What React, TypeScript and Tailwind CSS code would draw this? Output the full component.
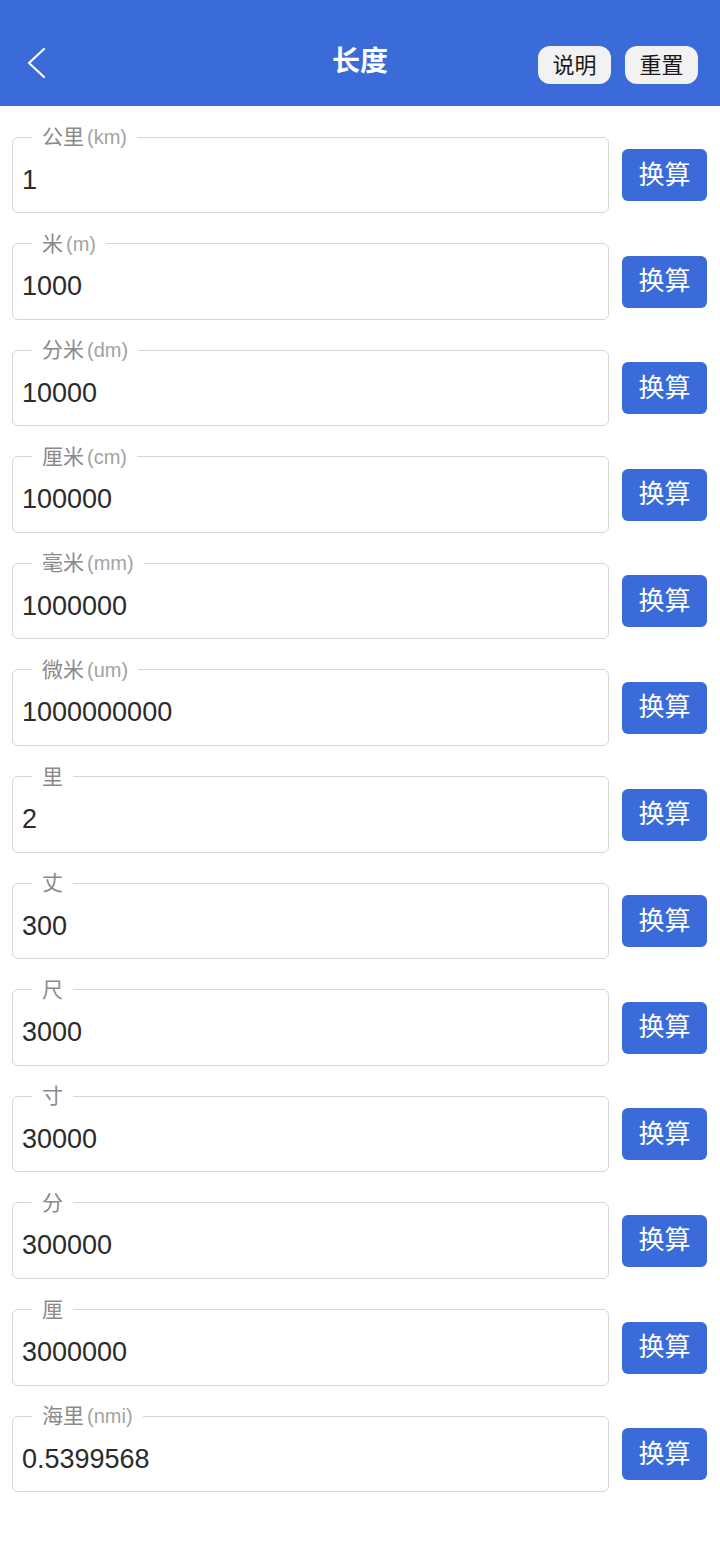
const ROWS: { name: string; unit?: string; value: string }[] = [
  { name: "公里", unit: "(km)", value: "1" },
  { name: "米", unit: "(m)", value: "1000" },
  { name: "分米", unit: "(dm)", value: "10000" },
  { name: "厘米", unit: "(cm)", value: "100000" },
  { name: "毫米", unit: "(mm)", value: "1000000" },
  { name: "微米", unit: "(um)", value: "1000000000" },
  { name: "里", value: "2" },
  { name: "丈", value: "300" },
  { name: "尺", value: "3000" },
  { name: "寸", value: "30000" },
  { name: "分", value: "300000" },
  { name: "厘", value: "3000000" },
  { name: "海里", unit: "(nmi)", value: "0.5399568" },
];

const FONT = { fontFamily: '"Liberation Sans", "Noto Sans CJK SC", sans-serif' };

function Row({ name, unit, value }: { name: string; unit?: string; value: string }) {
  return (
    <div className="flex items-end gap-[13px]">
      <fieldset className="flex-1 h-[88px] border-[1.5px] border-[#d6d6d6] rounded-[6px] pl-[9px] pr-2 m-0 flex items-center">
        <legend className="ml-[10px] px-[10px] leading-[24px] text-[21px] text-[#8a8a8a]">
          {name}
          {unit && <span className="text-[20px] text-[#a3a3a3] font-light ml-[3px]">{unit}</span>}
        </legend>
        <div className="text-[27px] text-[#2b2b2b] leading-none -mt-[1px]">{value}</div>
      </fieldset>
      <button className="w-[85px] h-[52px] mb-[12px] rounded-[6px] bg-[#3a6bd9] text-white text-[26px] flex items-center justify-center shrink-0">
        换算
      </button>
    </div>
  );
}

export default function App() {
  return (
    <div className="w-[720px] min-h-[1558px] bg-white" style={FONT}>
      <header className="h-[106px] bg-[#3a6bd9] flex items-center px-[20px] pt-[24px] relative">
        <svg width="20" height="32" viewBox="0 0 20 32" className="ml-[7px] -mt-[4px]">
          <polyline points="17,2 2,16 17,30" fill="none" stroke="white" strokeWidth="2.2" strokeLinecap="round" strokeLinejoin="round" />
        </svg>
        <h1 className="absolute left-0 right-0 top-[44px] text-center text-white text-[28px] font-bold leading-[36px] pointer-events-none">
          长度
        </h1>
        <div className="ml-auto flex gap-[14px] pr-[2px]">
          <button className="w-[73px] h-[38px] rounded-[12px] bg-[#f2f2f2] text-[#1a1a1a] text-[22px] flex items-center justify-center">
            说明
          </button>
          <button className="w-[73px] h-[38px] rounded-[12px] bg-[#f2f2f2] text-[#1a1a1a] text-[22px] flex items-center justify-center">
            重置
          </button>
        </div>
      </header>
      <main className="flex flex-col gap-[18.6px] pl-[12px] pr-[13px] pt-[19px]">
        {ROWS.map((r) => (
          <Row key={r.name} {...r} />
        ))}
      </main>
    </div>
  );
}
